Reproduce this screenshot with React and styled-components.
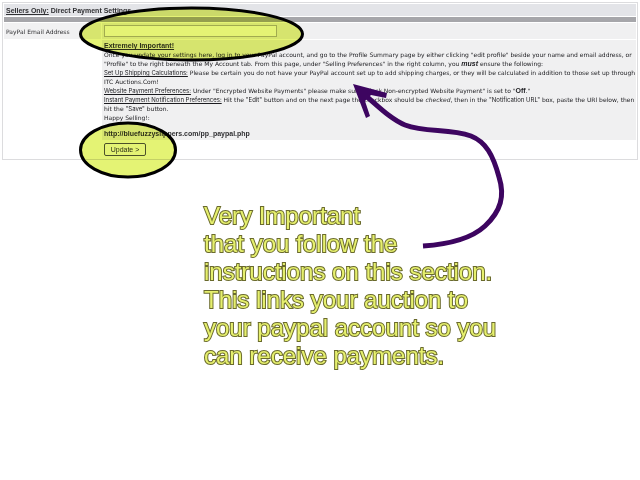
import React from "react";
import styled, { createGlobalStyle } from "styled-components";

const GlobalStyle = createGlobalStyle`
  * { box-sizing: border-box; }
  body {
    margin: 0;
    background: #fff;
    color: #303033;
    font-family: "Liberation Sans", Arial, sans-serif;
    font-size: 7px;
    line-height: 9px;
  }
`;

const Page = styled.main`
  position: relative;
  padding: 2px;
`;

const Panel = styled.form`
  display: flex;
  flex-direction: column;
  gap: 1px;
  padding: 1px;
  border: 1px solid #dcdcde;
`;

const Title = styled.h1`
  margin: 0;
  padding: 2px 2px 1px;
  background: #e3e4e8;
  font-size: 7px;
  line-height: 9px;
  font-weight: bold;
`;

const Divider = styled.div`
  height: 5px;
  background: #a6a6aa;
`;

const Row = styled.div`
  display: grid;
  grid-template-columns: 97px 1fr;
  gap: 1px;
`;

const LabelCell = styled.label`
  padding: 4px 2px 3px;
  background: #f1f1f2;
  font-family: "DejaVu Sans", sans-serif;
  font-size: 6px;
`;

const Cell = styled.div`
  padding: 2px 0 2px 2px;
  background: ${(p) => (p.$plain ? "#fff" : "#f0f0f1")};
`;

const EmailInput = styled.input`
  display: block;
  width: 173px;
  height: 12px;
  padding: 0 2px;
  border: 1px solid #b4b4ae;
  background: #fff;
  font: inherit;
`;

const Heading = styled.h2`
  margin: 0;
  font-size: 7px;
  line-height: 8px;
  text-decoration: underline;
`;

const Copy = styled.p`
  margin: 0;
  color: #1c1c20;
  font-family: "DejaVu Sans", sans-serif;
  font-size: 6px;
`;

const Term = styled.u`
  font-family: Inter, sans-serif;
`;

const ControlName = styled.span`
  font-family: Inter, sans-serif;
`;

const Strong = styled.strong`
  font-family: "Liberation Sans", Arial, sans-serif;
  font-size: 7px;
  line-height: 1;
  font-style: ${(p) => (p.$italic ? "italic" : "normal")};
`;

const Address = styled.p`
  margin: 7px 0 0;
  font-weight: bold;
`;

const UpdateButton = styled.button`
  display: block;
  width: 42px;
  height: 13px;
  padding: 0;
  border: 1px solid #55555a;
  border-radius: 2px;
  background: #fff;
  color: inherit;
  font: inherit;
`;

const Note = styled.p`
  margin: 42px 0 0 202px;
  color: #e6f06e;
  font-size: 24px;
  line-height: 28px;
  -webkit-text-stroke: 2px #6a6a2c;
  paint-order: stroke fill;
`;

const Marks = styled.svg`
  position: absolute;
  top: 0;
  left: 0;
  overflow: visible;
  pointer-events: none;
  mix-blend-mode: ${(p) => (p.$tint ? "multiply" : "normal")};
`;

export default function App() {
  return (
    <>
      <GlobalStyle />
      <Page>
        <Panel onSubmit={(e) => e.preventDefault()}>
          <Title><u>Sellers Only:</u> Direct Payment Settings</Title>
          <Divider />
          <Row>
            <LabelCell htmlFor="email">PayPal Email Address</LabelCell>
            <Cell>
              <EmailInput id="email" type="email" />
            </Cell>
          </Row>
          <Row>
            <span />
            <Cell>
              <Heading>Extremely Important!</Heading>
              <Copy>
                Once you update your settings here, log in to your PayPal account, and go to the Profile Summary page by either clicking "edit profile" beside your name and email address, or
                <br />
                "Profile" to the right beneath the My Account tab. From this page, under "Selling Preferences" in the right column, you <Strong $italic>must</Strong> ensure the following:
              </Copy>
              <Copy>
                <Term>Set Up Shipping Calculations:</Term> Please be certain you do not have your PayPal account set up to add shipping charges, or they will be calculated in addition to those set up through
                <br />
                ITC Auctions.Com!
              </Copy>
              <Copy>
                <Term>Website Payment Preferences:</Term> Under "Encrypted Website Payments" please make sure "Block Non-encrypted Website Payment" is set to "<Strong>Off</Strong>."
              </Copy>
              <Copy>
                <Term>Instant Payment Notification Preferences:</Term> Hit the <ControlName>"Edit"</ControlName> button and on the next page the checkbox should be <i>checked</i>, then in the <ControlName>"Notification URL"</ControlName> box, paste the URl below, then
                <br />
                hit the <ControlName>"Save"</ControlName> button.
              </Copy>
              <Copy>Happy Selling!:</Copy>
              <Address>http://bluefuzzyslippers.com/pp_paypal.php</Address>
            </Cell>
          </Row>
          <Row>
            <span />
            <Cell $plain>
              <UpdateButton type="submit">Update &gt;</UpdateButton>
            </Cell>
          </Row>
        </Panel>
        <Note>
          Very Important<br />
          that you follow the<br />
          instructions on this section.<br />
          This links your auction to<br />
          your paypal account so you<br />
          can receive payments.
        </Note>
        <Marks $tint width="310" height="180" aria-hidden="true">
          <ellipse cx="191.5" cy="34" rx="111" ry="26" fill="#e4f374" />
          <ellipse cx="128" cy="150" rx="47.5" ry="27" fill="#e4f374" />
        </Marks>
        <Marks width="510" height="250" fill="none" aria-hidden="true">
          <g stroke="#000" strokeWidth="3">
            <ellipse cx="191.5" cy="34" rx="111" ry="26" />
            <ellipse cx="128" cy="150" rx="47.5" ry="27" />
          </g>
          <g stroke="#3d0560" strokeWidth="5">
            <path d="M423 246C453 244 472 238 485 226C501 211 505 196 499 177C493 155 486 142 471 136C449 128 426 133 405 125C390 119 376 104 359 90" />
            <path fill="#3d0560" stroke="none" d="M353 84L387 93L386 98L371 95L365 101L370 116L366 118Z" />
          </g>
        </Marks>
      </Page>
    </>
  );
}
